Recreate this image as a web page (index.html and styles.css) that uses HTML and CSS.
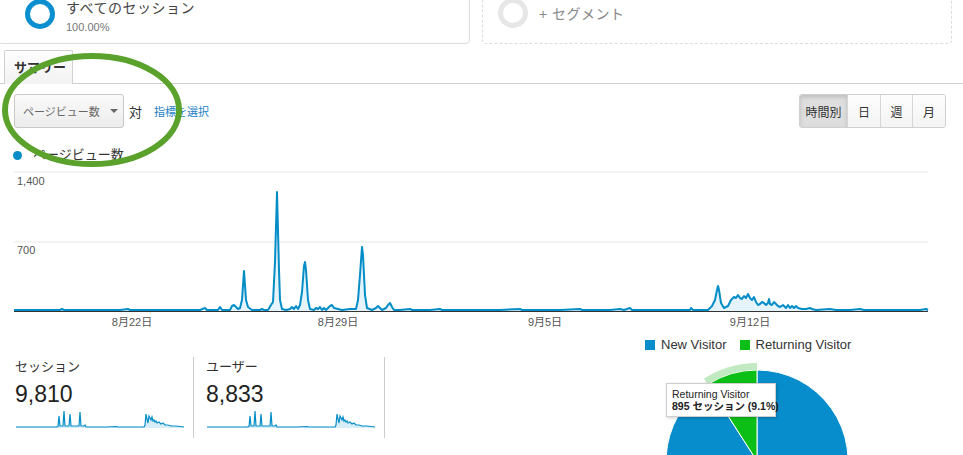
FILE: index.html
```html
<!DOCTYPE html>
<html lang="ja">
<head>
<meta charset="utf-8">
<title>サマリー</title>
<link rel="stylesheet" href="styles.css">
</head>
<body>
<div class="page">
  <div class="segments">
    <div class="seg seg-active">
      <svg class="ring" width="32" height="32" viewBox="0 0 32 32"><circle cx="16" cy="16" r="12.5" fill="none" stroke="#0b8fd0" stroke-width="5"/></svg>
      <div class="seg-text">
        <div class="seg-name">すべてのセッション</div>
        <div class="seg-pct">100.00%</div>
      </div>
    </div>
    <div class="seg seg-add">
      <svg class="ring" width="32" height="32" viewBox="0 0 32 32"><circle cx="16" cy="16" r="12.5" fill="none" stroke="#e6e6e6" stroke-width="5"/></svg>
      <div class="seg-add-text">+ セグメント</div>
    </div>
  </div>

  <div class="tabs">
    <div class="tab">サマリー</div>
  </div>

  <div class="controls">
    <div class="left-controls">
      <div class="dropdown"><span>ページビュー数</span><span class="caret"></span></div>
      <span class="vs">対</span>
      <a class="pick">指標を選択</a>
    </div>
    <div class="btn-group">
      <div class="btn active b-hour">時間別</div>
      <div class="btn b-day">日</div>
      <div class="btn b-week">週</div>
      <div class="btn b-month">月</div>
    </div>
  </div>

  <div class="legend"><span class="dot"></span>ページビュー数</div>

  <svg class="chart" width="963" height="170" viewBox="0 165 963 170">
    <line x1="14" y1="172" x2="928" y2="172" stroke="#e8e8e8" stroke-width="1"/>
    <line x1="14" y1="242" x2="928" y2="242" stroke="#e8e8e8" stroke-width="1"/>
    <text x="17" y="185" class="axis">1,400</text>
    <text x="17" y="254" class="axis">700</text>
    <path class="area" d="M14,310 L60,310 L62,309 L64,310 L120,310 L128,309 L130,310 L200,310 L205,308 L207,310 L218,310 L220,307 L222,310 L230,310 L232,306 L234,305 L236,307 L238,309 L240,308 L242,300 L244,271 L246,300 L248,307 L252,310 L260,310 L262,309 L264,310 L268,310 L271,305 L273,302 L275,262 L277,192 L279,270 L280,300 L282,309 L286,310 L290,309 L292,307 L294,309 L296,306 L298,309 L300,305 L302,292 L304,266 L305,262 L306,270 L308,300 L310,309 L314,310 L316,308 L318,309 L320,307 L322,310 L324,308 L326,310 L330,306 L332,305 L334,308 L338,309 L342,310 L350,309 L356,309 L358,300 L360,275 L362,247 L363,255 L365,295 L367,308 L372,310 L376,308 L378,306 L380,308 L382,310 L384,309 L386,308 L388,305 L390,303 L392,307 L394,310 L400,310 L410,309 L412,310 L430,310 L440,309 L442,310 L500,310 L520,309 L522,310 L560,310 L580,309 L582,310 L610,310 L620,309 L624,310 L630,308 L632,310 L670,310 L690,310 L691,308 L693,310 L708,310 L712,306 L715,300 L717,290 L718,286 L719,290 L721,303 L724,308 L728,306 L731,300 L734,297 L736,298 L738,295 L740,298 L742,299 L744,296 L746,298 L748,294 L750,298 L752,300 L754,297 L756,302 L758,305 L760,304 L762,302 L764,303 L766,305 L768,303 L769,299 L770,304 L772,305 L774,302 L776,304 L778,306 L780,307 L783,305 L786,308 L788,305 L790,308 L792,306 L794,308 L796,306 L798,308 L802,309 L806,309 L810,308 L812,309 L816,310 L830,309 L836,310 L850,310 L860,309 L864,310 L900,310 L920,310 L926,309 L928,310 L928,311 L14,311 Z"/>
    <path class="line" d="M14,310 L60,310 L62,309 L64,310 L120,310 L128,309 L130,310 L200,310 L205,308 L207,310 L218,310 L220,307 L222,310 L230,310 L232,306 L234,305 L236,307 L238,309 L240,308 L242,300 L244,271 L246,300 L248,307 L252,310 L260,310 L262,309 L264,310 L268,310 L271,305 L273,302 L275,262 L277,192 L279,270 L280,300 L282,309 L286,310 L290,309 L292,307 L294,309 L296,306 L298,309 L300,305 L302,292 L304,266 L305,262 L306,270 L308,300 L310,309 L314,310 L316,308 L318,309 L320,307 L322,310 L324,308 L326,310 L330,306 L332,305 L334,308 L338,309 L342,310 L350,309 L356,309 L358,300 L360,275 L362,247 L363,255 L365,295 L367,308 L372,310 L376,308 L378,306 L380,308 L382,310 L384,309 L386,308 L388,305 L390,303 L392,307 L394,310 L400,310 L410,309 L412,310 L430,310 L440,309 L442,310 L500,310 L520,309 L522,310 L560,310 L580,309 L582,310 L610,310 L620,309 L624,310 L630,308 L632,310 L670,310 L690,310 L691,308 L693,310 L708,310 L712,306 L715,300 L717,290 L718,286 L719,290 L721,303 L724,308 L728,306 L731,300 L734,297 L736,298 L738,295 L740,298 L742,299 L744,296 L746,298 L748,294 L750,298 L752,300 L754,297 L756,302 L758,305 L760,304 L762,302 L764,303 L766,305 L768,303 L769,299 L770,304 L772,305 L774,302 L776,304 L778,306 L780,307 L783,305 L786,308 L788,305 L790,308 L792,306 L794,308 L796,306 L798,308 L802,309 L806,309 L810,308 L812,309 L816,310 L830,309 L836,310 L850,310 L860,309 L864,310 L900,310 L920,310 L926,309 L928,310"/>
    <line x1="14" y1="311.5" x2="928" y2="311.5" stroke="#333" stroke-width="1"/>
    <text x="132" y="326" class="axis mid">8月22日</text>
    <text x="338" y="326" class="axis mid">8月29日</text>
    <text x="545" y="326" class="axis mid">9月5日</text>
    <text x="750" y="326" class="axis mid">9月12日</text>
  </svg>

  <div class="bottom">
    <div class="metrics">
      <div class="metric">
        <div class="m-label">セッション</div>
        <div class="m-value">9,810</div>
        <svg class="spark" width="168" height="20" viewBox="0 0 168 20">
          <path class="spark-area" d="M0,18 L40,18 L42,17.5 L43,7 L44,17 L47,17 L48,2 L49,17 L53,17 L54,5 L55,17 L63,17 L64,3 L65,17 L68,17 L69,16 L70,18 L90,18 L100,17.5 L102,18 L128,18 L129,16 L130,5 L131,10 L132,14 L133,7 L134,9 L135,11 L136,8 L137,12 L138,11 L139,13 L140,12 L141,14 L143,13 L145,15 L147,14 L149,16 L152,16 L155,17 L160,17 L168,18 L168,19 L0,19 Z"/>
          <path class="spark-line" d="M0,18 L40,18 L42,17.5 L43,7 L44,17 L47,17 L48,2 L49,17 L53,17 L54,5 L55,17 L63,17 L64,3 L65,17 L68,17 L69,16 L70,18 L90,18 L100,17.5 L102,18 L128,18 L129,16 L130,5 L131,10 L132,14 L133,7 L134,9 L135,11 L136,8 L137,12 L138,11 L139,13 L140,12 L141,14 L143,13 L145,15 L147,14 L149,16 L152,16 L155,17 L160,17 L168,18"/>
        </svg>
      </div>
      <div class="metric">
        <div class="m-label">ユーザー</div>
        <div class="m-value">8,833</div>
        <svg class="spark" width="168" height="20" viewBox="0 0 168 20">
          <path class="spark-area" d="M0,18 L40,18 L42,17.5 L43,7 L44,17 L47,17 L48,2 L49,17 L53,17 L54,5 L55,17 L63,17 L64,3 L65,17 L68,17 L69,16 L70,18 L90,18 L100,17.5 L102,18 L128,18 L129,16 L130,5 L131,10 L132,14 L133,7 L134,9 L135,11 L136,8 L137,12 L138,11 L139,13 L140,12 L141,14 L143,13 L145,15 L147,14 L149,16 L152,16 L155,17 L160,17 L168,18 L168,19 L0,19 Z"/>
          <path class="spark-line" d="M0,18 L40,18 L42,17.5 L43,7 L44,17 L47,17 L48,2 L49,17 L53,17 L54,5 L55,17 L63,17 L64,3 L65,17 L68,17 L69,16 L70,18 L90,18 L100,17.5 L102,18 L128,18 L129,16 L130,5 L131,10 L132,14 L133,7 L134,9 L135,11 L136,8 L137,12 L138,11 L139,13 L140,12 L141,14 L143,13 L145,15 L147,14 L149,16 L152,16 L155,17 L160,17 L168,18"/>
        </svg>
      </div>
    </div>

    <div class="pie-block">
      <div class="pie-legend">
        <span class="sq sq-new"></span><span class="pl-text">New Visitor</span>
        <span class="sq sq-ret"></span><span class="pl-text">Returning Visitor</span>
      </div>
      <svg class="pie" width="240" height="100" viewBox="640 355 240 100">
        <path d="M757,461 L757,370 A91,91 0 1 1 707.8,384.5 Z" fill="#078dcb" stroke="#fff" stroke-width="1"/>
        <path d="M757,461 L707.8,384.5 A91,91 0 0 1 757,370 Z" fill="#0cbf17" stroke="#fff" stroke-width="1"/>
        <path d="M707.8,384.5 A91,91 0 0 1 757,370 L757,363 A98,98 0 0 0 704,378.6 Z" fill="#c2eac2"/>
      </svg>
      <div class="tooltip">
        <div>Returning Visitor</div>
        <div class="tt-bold">895 セッション (9.1%)</div>
      </div>
    </div>
  </div>

  <svg class="annot" width="200" height="180" viewBox="0 0 200 180">
    <ellipse cx="92" cy="110" rx="87" ry="54" fill="none" stroke="#5aa22c" stroke-width="6"/>
  </svg>
</div>
</body>
</html>
```

FILE: styles.css
```css
html, body {
  margin: 0;
  padding: 0;
  background: #fff;
}
body {
  font-family: "Liberation Sans", Arial, "Noto Sans CJK JP", sans-serif;
  color: #333;
  width: 963px;
  height: 455px;
  overflow: hidden;
}
.page {
  position: relative;
  display: flow-root;
  width: 963px;
  height: 455px;
}

/* segments */
.segments {
  display: flex;
  margin-top: -16px;
  height: 60px;
}
.seg {
  box-sizing: border-box;
  height: 60px;
  width: 470px;
  border-radius: 4px;
  display: flex;
  align-items: flex-start;
}
.seg-active {
  margin-left: -2px;
  width: 472px;
  border: 1px solid #dcdcdc;
}
.seg-add {
  margin-left: 12px;
  border: 1px dashed #dcdcdc;
}
.ring {
  display: block;
  flex: none;
}
.seg-active .ring {
  margin: 13px 0 0 25px;
}
.seg-add .ring {
  margin: 12px 0 0 14px;
}
.seg-text {
  margin: 15px 0 0 10px;
}
.seg-name {
  font-size: 14px;
  line-height: 16px;
  color: #444;
  letter-spacing: 0.5px;
}
.seg-pct {
  font-size: 11px;
  line-height: 13px;
  margin-top: 5px;
  color: #777;
}
.seg-add-text {
  margin: 21px 0 0 10px;
  font-size: 14px;
  line-height: 16px;
  color: #888;
  letter-spacing: 0.5px;
}

/* tabs */
.tabs {
  margin-top: 6px;
  height: 33px;
  border-bottom: 1px solid #cfcfcf;
  display: flex;
  padding-left: 4px;
}
.tab {
  box-sizing: border-box;
  width: 69px;
  height: 34px;
  border: 1px solid #d0d0d0;
  border-bottom: none;
  border-radius: 2px 2px 0 0;
  background: linear-gradient(#fefefe, #f2f2f2);
  font-size: 13px;
  font-weight: bold;
  color: #333;
  padding: 9px 0 0 9px;
  line-height: 16px;
}

/* controls */
.controls {
  display: flex;
  justify-content: space-between;
  align-items: center;
  margin-top: 10px;
  height: 34px;
  padding: 0 17px 0 14px;
}
.left-controls {
  display: flex;
  align-items: center;
}
.dropdown {
  box-sizing: border-box;
  width: 110px;
  height: 34px;
  border: 1px solid #c8c8c8;
  border-radius: 3px;
  background: linear-gradient(#fafafa, #ececec);
  display: flex;
  align-items: center;
  padding-left: 8px;
  font-size: 11px;
  color: #666;
}
.caret {
  width: 0;
  height: 0;
  border-left: 4px solid transparent;
  border-right: 4px solid transparent;
  border-top: 4px solid #666;
  margin-left: 10px;
}
.vs {
  font-size: 13px;
  margin-left: 5px;
  color: #333;
}
.pick {
  font-size: 11px;
  color: #1b7fc6;
  margin-left: 12px;
}
.btn-group {
  display: flex;
  border: 1px solid #cfcfcf;
  border-radius: 3px;
  height: 34px;
  box-sizing: border-box;
  overflow: hidden;
}
.btn {
  box-sizing: border-box;
  height: 32px;
  display: flex;
  align-items: center;
  justify-content: center;
  font-size: 12px;
  color: #333;
  background: linear-gradient(#fdfdfd, #f4f4f4);
  border-left: 1px solid #d6d6d6;
}
.btn.b-hour {
  border-left: none;
  width: 47px;
}
.b-day { width: 33px; }
.b-week { width: 32px; }
.b-month { width: 33px; }
.btn.active {
  background: #dedede;
  box-shadow: inset 0 2px 4px rgba(0,0,0,0.15);
}

/* legend */
.legend {
  margin-top: 20px;
  height: 14px;
  line-height: 14px;
  font-size: 13px;
  color: #333;
  display: flex;
  align-items: center;
  padding-left: 13px;
}
.dot {
  width: 9px;
  height: 9px;
  border-radius: 50%;
  background: #058dc7;
  margin-right: 11px;
}

/* chart */
.chart {
  display: block;
  margin-top: 3px;
}
.axis {
  font-family: "Liberation Sans", Arial, "Noto Sans CJK JP", sans-serif;
  font-size: 11px;
  fill: #555;
}
.axis.mid {
  text-anchor: middle;
}
.area {
  fill: #e5f4fb;
}
.line {
  fill: none;
  stroke: #058dc7;
  stroke-width: 2;
  stroke-linejoin: round;
}

/* bottom */
.bottom {
  display: flex;
  height: 120px;
}
.metrics {
  display: flex;
  padding: 22px 0 0 14px;
  width: 400px;
  box-sizing: border-box;
}
.metric {
  width: 180px;
  height: 81px;
  border-right: 1px solid #cccccc;
  box-sizing: border-box;
  padding: 2px 0 0 1px;
}
.metric + .metric {
  margin-left: 0;
  padding-left: 12px;
  width: 191px;
}
.m-label {
  font-size: 13px;
  line-height: 16px;
  color: #333;
}
.m-value {
  font-size: 23px;
  line-height: 26px;
  margin-top: 6px;
  color: #222;
}
.spark {
  display: block;
  margin-top: 2px;
  margin-left: 1px;
}
.spark-area {
  fill: #d7eef9;
}
.spark-line {
  fill: none;
  stroke: #058dc7;
  stroke-width: 1.2;
}

/* pie */
.pie-block {
  position: relative;
  width: 563px;
}
.pie-legend {
  display: flex;
  align-items: center;
  margin-top: 4px;
  padding-left: 245px;
  height: 12px;
  font-size: 13px;
  color: #333;
}
.sq {
  width: 10px;
  height: 10px;
  display: inline-block;
}
.sq-new { background: #078dcb; }
.sq-ret { background: #0cbf17; margin-left: 13px; }
.pl-text {
  margin-left: 6px;
  line-height: 12px;
}
.pie {
  display: block;
  margin: 4px 0 0 240px;
}
.tooltip {
  position: absolute;
  left: 266px;
  top: 48px;
  width: 110px;
  box-sizing: border-box;
  background: #fff;
  border: 1px solid #cfcfcf;
  box-shadow: 1px 1px 3px rgba(0,0,0,0.2);
  padding: 4px 5px 4px 5px;
  font-size: 10.5px;
  line-height: 12px;
  color: #222;
  white-space: nowrap;
}
.tt-bold {
  font-weight: bold;
}

/* annotation */
.annot {
  position: absolute;
  left: 0;
  top: 0;
  pointer-events: none;
}
```
